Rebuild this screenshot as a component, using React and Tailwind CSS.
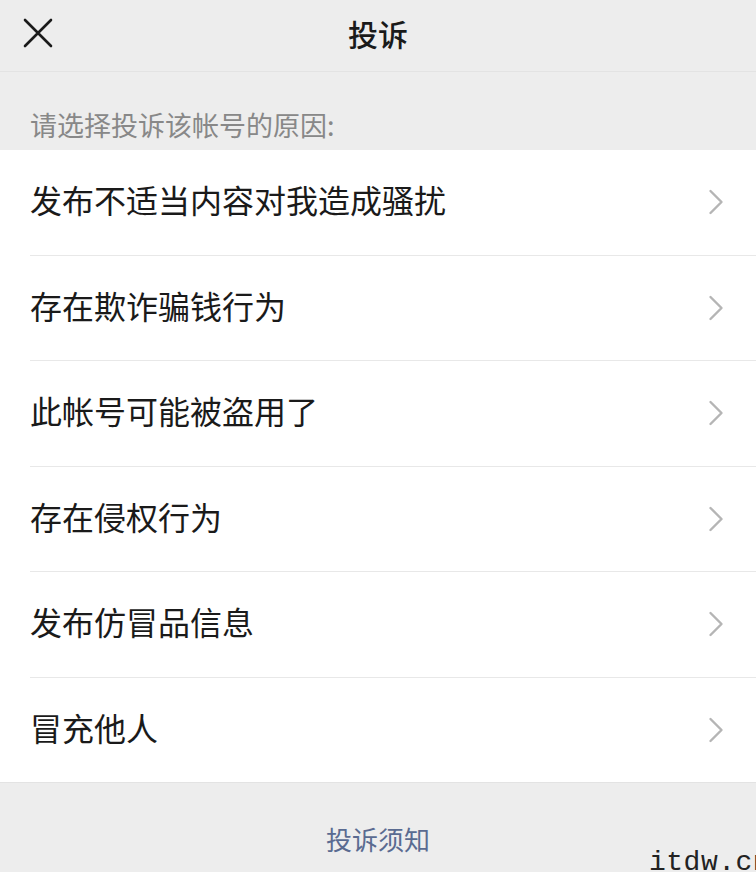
import React from "react";

const items = [
  "发布不适当内容对我造成骚扰",
  "存在欺诈骗钱行为",
  "此帐号可能被盗用了",
  "存在侵权行为",
  "发布仿冒品信息",
  "冒充他人",
];

function Chevron() {
  return (
    <svg width="16" height="26" viewBox="0 0 16 26" fill="none">
      <path d="M2.5 2 L13.5 13 L2.5 24" stroke="#b5b5b5" strokeWidth="2.4" strokeLinecap="round" strokeLinejoin="round" />
    </svg>
  );
}

export default function App() {
  return (
    <div
      className="relative w-[756px] h-[872px] overflow-hidden bg-[#ededed]"
      style={{ fontFamily: '"Noto Sans CJK SC", "Noto Sans", sans-serif' }}
    >
      <div className="relative h-[72px] flex items-center justify-center border-b border-[#e3e3e3]">
        <div className="absolute left-[22px] top-[17px]">
          <svg width="32" height="32" viewBox="0 0 32 32" fill="none">
            <path d="M3 3 L29 29 M29 3 L3 29" stroke="#1a1a1a" strokeWidth="2.6" strokeLinecap="round" />
          </svg>
        </div>
        <div className="text-[30px] font-medium text-[#1a1a1a] leading-none -mt-[6px]">投诉</div>
      </div>
      <div className="h-[78px] flex items-end pb-[12px] pl-[30px]">
        <span className="text-[27px] leading-none text-[#888888]">请选择投诉该帐号的原因:</span>
      </div>
      <div className="bg-white">
        {items.map((t, i) => (
          <div key={i}>
            {i > 0 && <div className="ml-[30px] h-px bg-[#e8e8e8]" />}
            <div className="h-[104.5px] flex items-center justify-between pl-[30px] pr-[32px]">
              <span className="text-[32px] leading-none text-[#1a1a1a] -mt-[6px]">{t}</span>
              <Chevron />
            </div>
          </div>
        ))}
      </div>
      <div className="border-t border-[#e3e3e3] h-[88px] flex items-center justify-center">
        <span className="text-[26px] leading-none text-[#5a6b91] mt-[24px]">投诉须知</span>
      </div>
      <div
        className="absolute left-[649px] top-[849px] text-[28px] tracking-[0.5px] leading-none text-[#222222] whitespace-nowrap"
        style={{ fontFamily: '"Liberation Mono", monospace' }}
      >
        itdw.cn
      </div>
    </div>
  );
}
